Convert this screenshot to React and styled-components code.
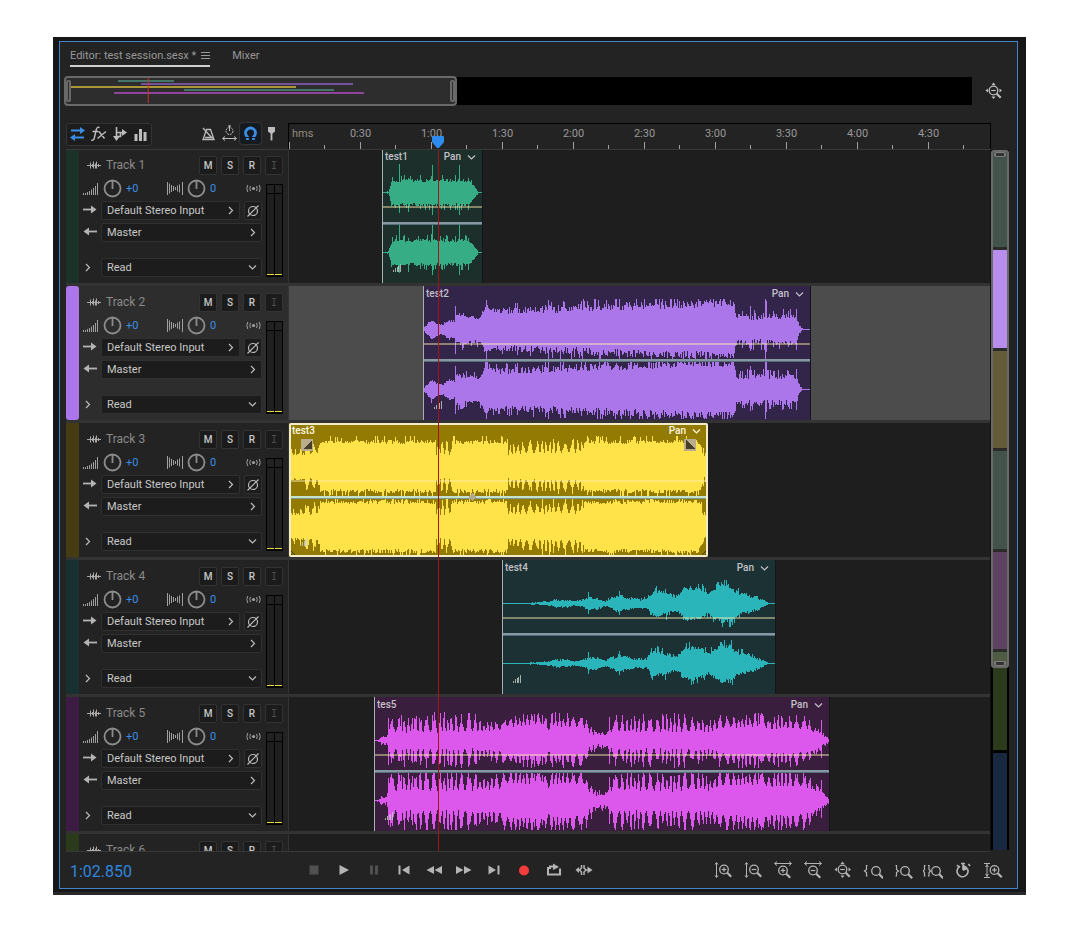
import React, { useMemo } from "react";
import styled, { createGlobalStyle, css } from "styled-components";

const GlobalStyle = createGlobalStyle`
  * {
    box-sizing: border-box;
  }
  body {
    margin: 0;
    background: #fff;
    color: #bdbdbd;
    font-family: Roboto, "Liberation Sans", sans-serif;
    font-size: 11px;
    line-height: 16px;
  }
  button, select, input {
    margin: 0;
    padding: 0;
    border: 0;
    background: none;
    color: inherit;
    font: inherit;
  }
  svg {
    display: block;
    flex: none;
  }
`;

const Page = styled.div`
  height: 100vh;
  padding: 37px 53px;
  display: flex;
`;

const Frame = styled.div`
  flex: 1;
  min-width: 0;
  display: flex;
  padding: 4px 8px 3px 6px;
  background: #161719;
  border-bottom: 3px solid #292929;
`;

const Panel = styled.main`
  flex: 1;
  min-width: 0;
  display: flex;
  flex-direction: column;
  background: #232323;
  border: 1px solid #4682c8;
`;

/* Tabs */

const Tabs = styled.nav`
  height: 34px;
  padding: 4px 10px 0;
  display: flex;
  align-items: flex-start;
  gap: 22px;
`;

const Tab = styled.button`
  height: 21px;
  display: flex;
  align-items: center;
  gap: 5px;
  font-size: 11px;
  color: #989898;
  white-space: nowrap;
  border-bottom: 2px solid ${props => (props.$active ? "#d0d0d0" : "transparent")};
`;

/* Overview */

const OverviewRow = styled.div`
  height: 30px;
  padding: 0 13px 0 4px;
  margin-bottom: 17px;
  display: flex;
  align-items: center;
  gap: 11px;
`;

const Overview = styled.div`
  flex: 1;
  height: 28px;
  display: flex;
  align-items: center;
  background: linear-gradient(90deg, #232323 10px, #000 10px);
`;

const OverviewWindow = styled.div`
  width: 393px;
  height: 30px;
  flex: none;
  display: flex;
  align-items: center;
  justify-content: space-between;
  background: #2d2d2d;
  border: 2px solid #696969;
  border-radius: 4px;
`;

const Handle = styled.span`
  width: 5px;
  height: 22px;
  flex: none;
  background: #2d2d2d;
  border: 2px solid #696969;
  border-radius: 2px;
`;

const OverviewChart = styled.svg`
  flex: 1;
  min-width: 0;
  height: 26px;
`;

/* Workspace */

const Workspace = styled.div`
  flex: 1;
  min-height: 0;
  display: flex;
  padding: 0 8px 0 6px;
`;

const Session = styled.div`
  flex: 1;
  min-width: 0;
  display: flex;
  flex-direction: column;
`;

const SessionHead = styled.div`
  position: relative;
  z-index: 2;
  height: 27px;
  flex: none;
  margin-bottom: -1px;
  display: flex;
  border-bottom: 1px solid #383838;
`;

const Tools = styled.div`
  width: 222px;
  flex: none;
  padding: 0 6px 0 0;
  display: flex;
  align-items: flex-start;
`;

const ToolGroup = styled.div`
  display: flex;
  margin-right: auto;
  border: 1px solid #343434;
  border-radius: 3px;
  background: #1d1d1d;
`;

const Tool = styled.button`
  width: 21px;
  height: 21px;
  display: flex;
  align-items: center;
  justify-content: center;
  border-radius: 3px;
  color: ${props => (props.$active ? "#3b8de6" : "#bdbdbd")};
  ${props =>
    props.$boxed &&
    css`
      background: #151a20;
      box-shadow: 0 0 0 1px #343434;
    `}
`;

const Ruler = styled.div`
  position: relative;
  flex: 1;
  min-width: 0;
  overflow: hidden;
  border: 1px solid #000;
  border-bottom: 0;
`;

const RulerLabels = styled.div`
  display: flex;
  padding-top: 2px;
  color: #999;
`;

const RulerUnit = styled.span`
  width: 36px;
  flex: none;
  padding-left: 3px;
  color: #938c7c;
`;

const RulerLabel = styled.span`
  width: 71px;
  flex: none;
  text-align: center;
`;

const PlayheadMarker = styled.svg`
  position: absolute;
  left: 143px;
  top: 12px;
`;

const Viewport = styled.div`
  position: relative;
  flex: 1;
  min-height: 0;
  overflow: hidden;
  border-bottom: 1px solid #383838;
  border-right: 1px solid #111;
`;

const PlayheadLine = styled.span`
  position: absolute;
  z-index: 1;
  left: 372px;
  top: 0;
  bottom: 0;
  width: 1px;
  background: #a51414;
`;

/* Tracks */

const TrackRow = styled.section`
  height: 137px;
  display: flex;
  border-bottom: 3px solid #333;
`;

const TrackHeader = styled.div`
  width: 223px;
  flex: none;
  display: flex;
  background: ${props => (props.$selected ? "#2d2d2d" : "#232323")};
  border-right: 1px solid #343434;
`;

const ColorStrip = styled.span`
  width: 13px;
  flex: none;
  background: ${props => props.$color};
  border-radius: ${props => (props.$selected ? "3px" : "0")};
`;

const HeaderBody = styled.div`
  flex: 1;
  min-width: 0;
  padding: 7px 5px 0 4px;
`;

const TitleLine = styled.div`
  height: 19px;
  margin-bottom: 4px;
  display: flex;
  align-items: center;
  gap: 4px;
`;

const TitleIcon = styled.span`
  width: 19px;
  flex: none;
  padding: 0 0 1px 3px;
`;

const TrackName = styled.h2`
  margin: 0 auto 0 0;
  padding-bottom: 1px;
  font-size: 12px;
  font-weight: 400;
  color: #8a8a8a;
  white-space: nowrap;
`;

const ToggleButton = styled.button`
  width: 18px;
  height: 19px;
  flex: none;
  background: #1b1b1b;
  border: 1px solid #333;
  border-radius: 2px;
  color: ${props => (props.disabled ? "#4c4c4c" : "#c8c8c8")};
  font-family: ${props => (props.disabled ? '"DejaVu Sans Mono", monospace' : "Roboto, sans-serif")};
  font-size: 10px;
  font-weight: ${props => (props.disabled ? 400 : 500)};
  line-height: 17px;
`;

const Controls = styled.div`
  display: grid;
  grid-template-columns: 1fr 17px;
  column-gap: 4px;
`;

const ControlRows = styled.div`
  display: flex;
  flex-direction: column;
  gap: 3px;
`;

const KnobLine = styled.div`
  height: 19px;
  display: grid;
  grid-template-columns: 20px 23px 41px 20px 23px 1fr 17px;
  align-items: center;
`;

const ValueInput = styled.input`
  width: 24px;
  color: #3b8de6;
`;

const ControlLine = styled.div`
  height: 19px;
  margin-top: ${props => (props.$spaced ? "13px" : "0")};
  display: flex;
`;

const LineIcon = styled.span`
  width: 18px;
  flex: none;
  padding-top: 1px;
`;

const ExpandButton = styled.button`
  width: 18px;
  flex: none;
  display: flex;
  align-items: center;
`;

const SelectBox = styled.label`
  flex: 1;
  min-width: 0;
  display: flex;
  align-items: center;
  padding-right: 4px;
  background: #1c1c1c;
  border: 1px solid #303030;
  border-radius: 2px;
`;

const Select = styled.select`
  flex: 1;
  min-width: 0;
  height: 17px;
  padding-left: 5px;
  appearance: none;
  outline: 0;
  color: #c8c8c8;
`;

const PhaseButton = styled.button`
  width: 18px;
  margin-left: 4px;
  display: flex;
  align-items: center;
  justify-content: center;
  background: #1c1c1c;
  border: 1px solid #303030;
  border-radius: 2px;
`;

const Meter = styled.div`
  height: 93px;
  margin-top: 5px;
  display: grid;
  grid-template-columns: 1fr 1fr;
  background: #000;
  border: 1px solid #000;
  column-gap: 1px;
`;

const MeterBar = styled.span`
  background: linear-gradient(#222 8px, #000 8px, #000 9px, #1f1f1f 9px);
  border-bottom: 1px solid #e8dc3c;
  margin-bottom: 1px;
`;

const Lane = styled.div`
  flex: 1;
  min-width: 0;
  overflow: hidden;
  background: ${props => (props.$selected ? "#4c4c4c" : "#1e1e1e")};
`;

const ClipBox = styled.article`
  position: relative;
  width: ${props => props.$width}px;
  height: 134px;
  margin-left: ${props => props.$start}px;
  background: ${props => props.$bg};
  overflow: hidden;
  border-radius: ${props => (props.$selected ? "2px" : "0")};
`;

const ClipHead = styled.div`
  position: absolute;
  top: 0;
  left: 3px;
  right: 7px;
  height: 16px;
  display: flex;
  align-items: center;
  font-size: 10px;
  font-weight: 500;
  color: ${props => (props.$selected ? "#fffbe8" : "#c4c0c8")};
`;

const ClipName = styled.span`
  margin-right: auto;
`;

const PanButton = styled.button`
  display: flex;
  align-items: center;
  gap: 6px;
  font-weight: 500;
`;

/* Vertical navigator */

const Navigator = styled.div`
  position: relative;
  width: 18px;
  flex: none;
  margin: 27px 0 2px;
  padding: 0 2px;
  display: flex;
  flex-direction: column;
  gap: 3px;
  background: #000;
`;

const NavSegment = styled.span`
  flex: 1;
  background: ${props => props.$color};
`;

const NavThumb = styled.div`
  position: absolute;
  left: 0;
  right: 0;
  top: 0;
  height: 74%;
  display: flex;
  flex-direction: column;
  align-items: center;
  justify-content: space-between;
  background: rgba(255, 255, 255, 0.17);
  border: 2px solid #6a6a6a;
  border-radius: 3px;
`;

const NavGrip = styled.span`
  width: 12px;
  height: 5px;
  background: #333;
  border: solid #7a7a7a;
  border-width: 1px 2px;
  border-radius: 2px;
`;

/* Transport */

const Transport = styled.footer`
  height: 36px;
  flex: none;
  padding: 0 9px 0 10px;
  display: flex;
  align-items: center;
`;

const Time = styled.output`
  width: 229px;
  padding-top: 4px;
  font-size: 16px;
  line-height: 20px;
  color: #2f86de;
`;

const TransportGroup = styled.div`
  display: flex;
  margin-left: ${props => (props.$end ? "auto" : "0")};
`;

const TransportButton = styled.button`
  width: 30px;
  height: 24px;
  display: flex;
  align-items: center;
  justify-content: center;
  color: ${props => (props.disabled ? "#505050" : "#b4b4b4")};
`;

// Envelope points are [x, quiet, loud] in pixels, spikes are [x, up, down].
const tracks = [
  {
    name: "Track 1",
    strip: "#1c3128",
    clip: {
      name: "test1",
      start: 93,
      width: 101,
      bg: "#1d2f2a",
      wave: "#37ad85",
      env: [[0, 0, 0], [6, 0, 1], [8, 5, 8], [10, 10, 14], [14, 10, 13], [50, 10, 14], [84, 10, 14], [88, 9, 11], [92, 5, 6], [95, 1, 2], [96, 0, 0], [101, 0, 0]],
      spikes: [[10, 15, 12], [17, 28, 20], [26, 14, 19], [50, 27, 22], [59, 12, 16], [77, 27, 22], [86, 14, 17]],
    },
  },
  {
    name: "Track 2",
    strip: "#ab76ea",
    selected: true,
    clip: {
      name: "test2",
      start: 134,
      width: 388,
      bg: "#33244a",
      wave: "#ab76ea",
      env: [[0, 0, 1], [5, 5, 7], [9, 8, 10], [15, 4, 5], [20, 4, 6], [26, 7, 10], [31, 7, 9], [33, 12, 17], [42, 11, 15], [56, 10, 13], [60, 16, 20], [63, 23, 27], [66, 18, 22], [75, 15, 22], [120, 16, 25], [180, 18, 27], [230, 20, 29], [311, 22, 30], [313, 10, 16], [330, 9, 17], [373, 10, 16], [375, 4, 7], [379, 0, 1], [382, 0, 0], [388, 0, 0]],
      spikes: [[32, 23, 24], [40, 16, 18], [63, 29, 30], [94, 26, 25], [125, 29, 30], [140, 28, 24], [158, 28, 26], [319, 18, 18], [327, 23, 21], [342, 30, 30], [343, 28, 22], [350, 18, 17], [365, 18, 17], [373, 20, 20]],
    },
  },
  {
    name: "Track 3",
    strip: "#453c12",
    clip: {
      name: "test3",
      start: 0,
      width: 419,
      bg: "#937a02",
      wave: "#ffe349",
      active: true,
      rhythm: true,
      env: [[0, 11, 14], [15, 11, 14], [16, 10, 24], [29, 12, 24], [31, 22, 26], [90, 22, 27], [146, 22, 27], [147, 11, 28], [162, 11, 28], [163, 22, 27], [217, 22, 27], [219, 11, 21], [240, 12, 25], [262, 12, 28], [280, 12, 27], [293, 13, 27], [295, 22, 26], [350, 22, 27], [408, 23, 27], [411, 18, 24], [414, 10, 16], [419, 8, 10]],
      spikes: [],
    },
  },
  {
    name: "Track 4",
    strip: "#193031",
    clip: {
      name: "test4",
      start: 213,
      width: 274,
      bg: "#1b3133",
      wave: "#29b5ba",
      env: [[0, 0, 0], [22, 0, 0], [30, 0, 1], [48, 1, 2], [52, 2, 4], [64, 2, 4], [72, 1, 2], [80, 2, 4], [87, 4, 7], [95, 3, 6], [103, 1, 3], [108, 3, 6], [117, 6, 9], [125, 4, 7], [135, 2, 5], [144, 3, 6], [149, 8, 12], [155, 9, 14], [165, 7, 12], [173, 5, 8], [178, 8, 11], [181, 12, 17], [190, 13, 18], [200, 11, 16], [206, 8, 10], [212, 12, 16], [219, 15, 20], [228, 14, 20], [236, 8, 12], [250, 5, 9], [257, 3, 6], [262, 1, 3], [266, 0, 0], [274, 0, 0]],
      spikes: [[86, 11, 10], [117, 12, 11], [153, 15, 12], [219, 21, 19], [222, 23, 18], [230, 14, 21]],
    },
  },
  {
    name: "Track 5",
    strip: "#3d1c43",
    clip: {
      name: "tes5",
      start: 85,
      width: 456,
      bg: "#3a1e3e",
      wave: "#dc58ec",
      rhythm: true,
      lowerGain: 1.2,
      env: [[0, 0, 0], [5, 0, 1], [7, 1, 4], [12, 1, 4], [14, 7, 24], [60, 7, 27], [104, 7, 26], [106, 8, 18], [128, 9, 22], [132, 13, 26], [168, 14, 27], [173, 8, 20], [178, 13, 27], [210, 12, 26], [216, 5, 15], [224, 3, 9], [232, 3, 7], [234, 5, 9], [235, 7, 25], [300, 7, 26], [325, 8, 25], [334, 7, 18], [345, 11, 25], [390, 13, 27], [395, 9, 22], [400, 11, 26], [433, 10, 24], [438, 7, 15], [446, 5, 11], [451, 2, 5], [456, 0, 1]],
      spikes: [[14, 22, 24], [27, 25, 20], [40, 22, 21], [58, 25, 23], [66, 27, 22], [76, 21, 24], [101, 26, 23], [160, 26, 26], [168, 25, 24], [178, 27, 26], [235, 23, 23], [288, 26, 22], [384, 27, 27], [447, 20, 17]],
    },
  },
  { name: "Track 6", strip: "#2c3a1c" },
];

const times = ["0:30", "1:00", "1:30", "2:00", "2:30", "3:00", "3:30", "4:00", "4:30"];

const navColors = ["#1c3128", "#ab76ea", "#453c12", "#1c3128", "#3d1c43", "#2c3a1c", "#182840"];

const randomFrom = seed => {
  let s = seed;
  return () => {
    s = (s * 16807) % 2147483647;
    return s / 2147483647;
  };
};

const levelAt = (env, x) => {
  let i = 1;
  while (i < env.length - 1 && env[i][0] < x) i++;
  const [x0, a0, b0] = env[i - 1];
  const [x1, a1, b1] = env[i];
  const t = Math.min(1, Math.max(0, (x - x0) / (x1 - x0)));
  return [a0 + (a1 - a0) * t, b0 + (b1 - b0) * t];
};

const wavePath = (clip, centre, seed, gain = 1) => {
  const next = randomFrom(seed);
  let d = "";
  for (let x = 0; x < clip.width; x++) {
    const [low, high] = levelAt(clip.env, x);
    const range = high - low;
    const beaten = clip.rhythm && range > 8;
    const beat = Math.pow(Math.sin(x * 0.62 + 1.4 * Math.sin(x * 0.17)), 2);
    const level = () => {
      const r = next();
      if (beaten) return low + range * Math.min(1.05, beat * (0.5 + 0.6 * r) + 0.1 * next());
      // rare peaks stand a few pixels above the loud level
      return low + range * r + (low > 7 && r > 0.88 ? 2 + next() * 2 : 0);
    };
    let up = level() * gain;
    let down = level() * gain;
    const spike = clip.spikes.find(item => item[0] === x);
    if (spike) {
      up = spike[1];
      down = spike[2];
    }
    up = Math.min(30, Math.round(up));
    down = Math.min(29, Math.round(down));
    d += `M${x + 0.5} ${centre - up}V${centre + down + 1}`;
  }
  return d;
};

const Icon = ({ size = 20, children, ...rest }) => (
  <svg width={size} height={size} viewBox={`0 0 ${size} ${size}`} fill="none" stroke="currentColor" aria-hidden="true" {...rest}>
    {children}
  </svg>
);

const Chevron = ({ down }) => (
  <svg width="9" height="9" viewBox="0 0 9 9" fill="none" stroke="currentColor" strokeWidth="1.2" aria-hidden="true">
    <path d={down ? "M1 2.5 4.5 6 8 2.5" : "M3 1 6.5 4.5 3 8"} />
  </svg>
);

const Lens = ({ x, y, sign }) => (
  <g transform={`translate(${x} ${y})`}>
    <circle r="4.3" strokeWidth="1.3" />
    <path d="m3.2 3.2 4 4" strokeWidth="2.2" />
    {sign && <path d="M-2.3 0h4.6" strokeWidth="1.2" />}
    {sign === "+" && <path d="M0-2.3v4.6" strokeWidth="1.2" />}
  </g>
);

const ZoomAllIcon = () => (
  <Icon>
    <Lens x={9.5} y={9.5} sign="-" />
    <path
      d="m9.5 1.500 2 2.500h-4zM9.500 18l2-2.500h-4zM1.500 9.500l2.500-2v4zM18 9.500l-2.500-2v4z"
      fill="currentColor"
      stroke="none"
    />
  </Icon>
);

const Knob = () => (
  <Icon size={19} stroke="#8c8c8c">
    <circle cx="9.5" cy="9.5" r="8" strokeWidth="1.8" />
    <path d="M9.5 2v8" strokeWidth="1.8" />
  </Icon>
);

const VolumeIcon = () => (
  <Icon size={16} stroke="#a0a0a0">
    <path d="M.5 14v-2M2.5 14v-2M4.5 14v-3M6.5 14v-4M8.5 14V8.5M10.5 14V7M12.5 14V5M14.5 14V2" />
  </Icon>
);

const StereoIcon = () => (
  <Icon size={17} stroke="#a0a0a0">
    <path d="M.5 2v13M2.5 3.5v10M4.5 5v7M6.5 6v5M8.5 7v3M10.5 5.5v6M12.5 4.5v8M15.5 2v13" />
  </Icon>
);

const MonitorIcon = () => (
  <Icon size={17} stroke="#a0a0a0">
    <circle cx="8.5" cy="8.5" r="1.6" fill="#a0a0a0" stroke="none" />
    <path d="M5.5 6q-1.500 2.500 0 5M11.5 6q1.500 2.500 0 5M2.800 5q-2 3.500 0 7M14.200 5q2 3.500 0 7" />
  </Icon>
);

const WaveIcon = () => (
  <Icon size={16} stroke="#aaa">
    <path d="M1 8.5h14M4.5 5.5v6M6.5 7v3M7.5 4.5v7M9.5 6.5v5M10.500 4.5v7M12.5 7v3" />
  </Icon>
);

const ArrowIcon = ({ back }) => (
  <Icon size={14} stroke="#b4b4b4" transform={back ? "scale(-1 1)" : undefined}>
    <path d="M0 7.500h10" strokeWidth="1.800" />
    <path d="m8 3.500 5.500 4L8 11.500z" fill="#b4b4b4" stroke="none" />
  </Icon>
);

const PhaseIcon = () => (
  <Icon size={14}>
    <circle cx="7" cy="7" r="4.5" strokeWidth="1.2" />
    <path d="M1.500 12.500 12.500 1.500" strokeWidth="1.2" />
  </Icon>
);

const transportIcons = [
  { label: "Stop", disabled: true, art: <path d="M5.500 5.500h9v9h-9z" fill="currentColor" stroke="none" /> },
  { label: "Play", art: <path d="M5.500 5 15 10l-9.500 5z" fill="currentColor" stroke="none" /> },
  { label: "Pause", disabled: true, art: <path d="M6 5.500h3v9H6zM11 5.500h3v9h-3z" fill="currentColor" stroke="none" /> },
  { label: "Move to previous", art: <path d="M4.500 5.500h2v9h-2zM15.500 5.500v9L8 10z" fill="currentColor" stroke="none" /> },
  { label: "Rewind", art: <path d="M10 6v8l-7.500-4zM18 6v8l-7.500-4z" fill="currentColor" stroke="none" /> },
  { label: "Fast forward", art: <path d="M2 6v8l7.500-4zM10 6v8l7.500-4z" fill="currentColor" stroke="none" /> },
  { label: "Move to next", art: <path d="M4.500 5.500v9L12 10zM13.500 5.500h2v9h-2z" fill="currentColor" stroke="none" /> },
  { label: "Record", art: <circle cx="10" cy="10.500" r="5" fill="#f23b3b" stroke="none" /> },
  {
    label: "Loop playback",
    art: (
      <>
        <path d="M5.500 8H4v6.500h12V8.500" strokeWidth="2" />
        <path d="M6 9V6.500h4" strokeWidth="2" />
        <path d="m9 3.500 6 3.500-6 3z" fill="currentColor" stroke="none" />
      </>
    ),
  },
  {
    label: "Skip selection",
    art: (
      <>
        <path d="M3 10h3M11.500 10h3M7.500 5v3L5.500 10l2 2v3M10 5v3l2 2-2 2v3" strokeWidth="1.500" />
        <path d="M5 7 1.500 10 5 13zM13.500 6.500l5 3.500-5 3.500z" fill="currentColor" stroke="none" />
      </>
    ),
  },
];

const zoomIcons = [
  {
    label: "Zoom in amplitude",
    art: (
      <>
        <path d="M3.500 3v14M2 4.500l1.500-2 1.500 2M2 15.500l1.500 2 1.500-2" />
        <Lens x={11} y={9.5} sign="+" />
      </>
    ),
  },
  {
    label: "Zoom out amplitude",
    art: (
      <>
        <path d="M3.500 3v14M2 4.500l1.500-2 1.500 2M2 15.500l1.500 2 1.500-2" />
        <Lens x={11} y={9.5} sign="-" />
      </>
    ),
  },
  {
    label: "Zoom in time",
    art: (
      <>
        <path d="M2 3.500h16M4 1.500l-2.500 2 2.500 2M16 1.500l2.500 2-2.500 2" />
        <Lens x={10} y={10.5} sign="+" />
      </>
    ),
  },
  {
    label: "Zoom out time",
    art: (
      <>
        <path d="M2 3.500h16M4 1.500l-2.500 2 2.500 2M16 1.500l2.500 2-2.500 2" />
        <Lens x={10} y={10.5} sign="-" />
      </>
    ),
  },
  { label: "Zoom out full", art: <ZoomAllIcon /> },
  {
    label: "Zoom in at in point",
    art: (
      <>
        <path d="M4.500 5.500H3.500V9.500L1.500 11l2 1.500v3.500h1" strokeWidth="1.2" />
        <Lens x={13} y={11} />
      </>
    ),
  },
  {
    label: "Zoom in at out point",
    art: (
      <>
        <path d="M2.500 5.500h1V9.500L5.500 11l-2 1.500v3.500h-1" strokeWidth="1.2" />
        <Lens x={12} y={11} />
      </>
    ),
  },
  {
    label: "Zoom to selection",
    art: (
      <>
        <path d="M2.500 5.500h-1V9.500L0 11l1.500 1.500v3.500h1M5 5.500h1V9.500L7.500 11 6 12.500v3.500H5" strokeWidth="1.2" />
        <Lens x={13} y={11} />
      </>
    ),
  },
  {
    label: "Zoom to time",
    art: (
      <>
        <path d="M7 6.300a5.500 5.500 0 1 0 7.500 2.500" strokeWidth="1.600" />
        <path d="M10 3.500V10M8 3.500h4M4 5l2 2M15.500 4l1.500 2" strokeWidth="1.600" />
        <path d="M10 11V5a6 6 0 0 1 5 4z" fill="currentColor" stroke="none" />
      </>
    ),
  },
  {
    label: "Zoom full height",
    art: (
      <>
        <path d="M1 3.500h6M1 17.500h6M4 4v13M2.500 7 4 5l1.500 2M2.500 14 4 16l1.500-2" />
        <Lens x={11.5} y={10} sign="+" />
      </>
    ),
  },
];

const Clip = ({ clip, seed }) => {
  const paths = useMemo(
    () => [wavePath(clip, 43, seed * 7919), wavePath(clip, 103, seed * 104729, clip.lowerGain)],
    [clip, seed]
  );
  const w = clip.width;

  return (
    <ClipBox $start={clip.start} $width={w} $bg={clip.bg} $selected={clip.active}>
      <svg width={w} height="134" viewBox={`0 0 ${w} 134`} shapeRendering="crispEdges" aria-hidden="true">
        {paths.map(d => (
          <path key={d} d={d} stroke={clip.wave} />
        ))}
        <path d={`M0 58h${w}`} stroke="#fff0b0" strokeWidth="2" opacity="0.45" />
        <path d={`M0 74h${w}`} stroke={clip.active ? "#c4e2cc" : "#8797a3"} strokeWidth="2" />
        <path d={`M0 75.500h${w}`} stroke={clip.active ? "#7f9a90" : "#566d7a"} />
        <path d="M11.500 123v-2M13.500 123v-4M15.500 123v-5M16.500 123v-6M18.500 123v-8" stroke="#c8d0c8" opacity="0.8" />
        {clip.active ? (
          <>
            <path d={`M12 16h12v12H12zM${w - 24} 16h12v12h-12z`} fill="#b8ac8c" />
            <path d={`M14 26 23 17v9zM${w - 22} 17v9h9z`} fill="#463e28" />
            <path d="m183 70 4 4-4 4-4-4z" fill="#b0aa90" />
            <path d={`M0 126l8 8M0 129l5 5M${w} 126l-8 8M${w} 129l-5 5`} stroke="#3c3200" />
            <rect x="1" y="1" width={w - 2} height="132" fill="none" stroke="#f2edc6" strokeWidth="2" />
          </>
        ) : (
          <>
            <path d="M.5 0v134" stroke="#a9aeb0" />
            <path d={`M${w - 0.5} 0v134`} stroke="#14141a" />
          </>
        )}
      </svg>
      <ClipHead $selected={clip.active}>
        <ClipName>{clip.name}</ClipName>
        <PanButton>
          Pan
          <Chevron down />
        </PanButton>
      </ClipHead>
    </ClipBox>
  );
};

const Track = ({ track, index }) => (
  <TrackRow>
    <TrackHeader $selected={track.selected}>
      <ColorStrip $color={track.strip} $selected={track.selected} />
      <HeaderBody>
        <TitleLine>
          <TitleIcon>
            <WaveIcon />
          </TitleIcon>
          <TrackName>{track.name}</TrackName>
          <ToggleButton aria-label="Mute">M</ToggleButton>
          <ToggleButton aria-label="Solo">S</ToggleButton>
          <ToggleButton aria-label="Record arm">R</ToggleButton>
          <ToggleButton aria-label="Monitor input" disabled>
            I
          </ToggleButton>
        </TitleLine>
        <Controls>
          <ControlRows>
            <KnobLine>
              <VolumeIcon />
              <Knob />
              <ValueInput aria-label={`${track.name} volume`} defaultValue="+0" />
              <StereoIcon />
              <Knob />
              <ValueInput aria-label={`${track.name} pan`} defaultValue="0" />
              <MonitorIcon />
            </KnobLine>
            <ControlLine>
              <LineIcon>
                <ArrowIcon />
              </LineIcon>
              <SelectBox>
                <Select aria-label={`${track.name} input`}>
                  <option>Default Stereo Input</option>
                </Select>
                <Chevron />
              </SelectBox>
              <PhaseButton aria-label="Invert phase">
                <PhaseIcon />
              </PhaseButton>
            </ControlLine>
            <ControlLine>
              <LineIcon>
                <ArrowIcon back />
              </LineIcon>
              <SelectBox>
                <Select aria-label={`${track.name} output`}>
                  <option>Master</option>
                </Select>
                <Chevron />
              </SelectBox>
            </ControlLine>
            <ControlLine $spaced>
              <ExpandButton aria-label="Show automation lanes">
                <Chevron />
              </ExpandButton>
              <SelectBox>
                <Select aria-label={`${track.name} automation mode`}>
                  <option>Read</option>
                </Select>
                <Chevron down />
              </SelectBox>
            </ControlLine>
          </ControlRows>
          <Meter>
            <MeterBar />
            <MeterBar />
          </Meter>
        </Controls>
      </HeaderBody>
    </TrackHeader>
    <Lane $selected={track.selected}>{track.clip && <Clip clip={track.clip} seed={index + 3} />}</Lane>
  </TrackRow>
);

const App = () => (
  <Page>
    <GlobalStyle />
    <Frame>
      <Panel>
        <Tabs>
          <Tab $active>
            Editor: test session.sesx *
            <svg width="9" height="9" viewBox="0 0 9 9" stroke="currentColor" aria-hidden="true">
              <path d="M0 1.500h9M0 4.500h9M0 7.500h9" />
            </svg>
          </Tab>
          <Tab>Mixer</Tab>
        </Tabs>

        <OverviewRow>
          <Overview>
            <OverviewWindow>
              <Handle />
              <OverviewChart viewBox="0 0 380 26" preserveAspectRatio="none" shapeRendering="crispEdges" aria-hidden="true">
                <g strokeWidth="2">
                  <path d="M47 3h56" stroke="#457468" />
                  <path d="M70 6h213" stroke="#76529a" />
                  <path d="M0 9h226" stroke="#ad963a" />
                  <path d="M113 12h151" stroke="#457468" />
                  <path d="M43 15h251" stroke="#8e459a" />
                </g>
                <path d="M77.500 0v25" stroke="#d03030" />
              </OverviewChart>
              <Handle />
            </OverviewWindow>
          </Overview>
          <Tool aria-label="Zoom out full">
            <ZoomAllIcon />
          </Tool>
        </OverviewRow>

        <Workspace>
          <Session>
            <SessionHead>
              <Tools>
                <ToolGroup>
                  <Tool $active aria-label="Inputs and outputs">
                    <Icon size={17}>
                      <path d="M2 4.500h10M5 11.500h10" strokeWidth="1.800" />
                      <path d="m11 1 5 3.500-5 3.500zM6 8 1 11.500 6 15z" fill="currentColor" stroke="none" />
                    </Icon>
                  </Tool>
                  <Tool aria-label="Effects">
                    <Icon size={17}>
                      <path d="M9.500 1.500q-2.500-1-3.200 2L4.300 12q-.6 3-3 2M2.500 5.500h6M9 5.500l5.500 7M16 5.500l-8.500 7" strokeWidth="1.400" />
                    </Icon>
                  </Tool>
                  <Tool aria-label="Sends">
                    <Icon size={17}>
                      <path d="M5.500 1v11M5.500 6.500h6M9.500 6.500v4H5.500" strokeWidth="1.600" />
                      <path d="m2 10 3.500 5L9 10zM11 3l5 3.500-5 3.500z" fill="currentColor" stroke="none" />
                    </Icon>
                  </Tool>
                  <Tool aria-label="EQ">
                    <Icon size={17}>
                      <path d="M4 8v7M8.500 3v12M13 6v9" strokeWidth="3" />
                    </Icon>
                  </Tool>
                </ToolGroup>
                <Tool aria-label="Metronome">
                  <Icon size={17}>
                    <path d="M6.500 4.500h4l3.500 10H3zM3 3l9 10M5 12.500h8" strokeWidth="1.300" />
                  </Icon>
                </Tool>
                <Tool aria-label="Stretch clips">
                  <Icon size={17}>
                    <circle cx="8.500" cy="6" r="3.500" strokeDasharray="2 1" />
                    <path d="M8.500 6V.5M7 1h3M2 13.500h13M4 11.500l-2.500 2 2.500 2M13 11.500l2.500 2-2.500 2" />
                  </Icon>
                </Tool>
                <Tool $active $boxed aria-label="Snapping">
                  <Icon size={17}>
                    <path d="M5.500 15V12Q3.500 10 3.500 8a5 5 0 0 1 10 0Q13.500 10 11.500 12V15" strokeWidth="2.800" />
                    <path d="M3.500 12.500h4M9.500 12.500h4" stroke="#151a20" />
                  </Icon>
                </Tool>
                <Tool aria-label="Add marker">
                  <Icon size={17}>
                    <path d="M5 2h7v4.500L9.500 8.500h-2L5 6.500z" fill="currentColor" stroke="none" />
                    <path d="M8.500 8v7.500" strokeWidth="1.800" />
                  </Icon>
                </Tool>
              </Tools>
              <Ruler>
                <RulerLabels>
                  <RulerUnit>hms</RulerUnit>
                  {times.map(time => (
                    <RulerLabel key={time}>{time}</RulerLabel>
                  ))}
                </RulerLabels>
                <svg width="700" height="8" viewBox="0 0 700 8" stroke="#a0a0a0" shapeRendering="crispEdges" aria-hidden="true">
                  {Array.from({ length: 20 }, (_, i) => (
                    <path key={i} d={`M${Math.floor(i * 35.5) + 0.5} ${i % 2 ? 3 : 0}V8`} />
                  ))}
                </svg>
                <PlayheadMarker width="12" height="13" viewBox="0 0 12 13" aria-hidden="true">
                  <path d="M0 1q0-1 1-1h10q1 0 1 1v5L7 12H5L0 6z" fill="#2d8ceb" />
                </PlayheadMarker>
              </Ruler>
            </SessionHead>
            <Viewport>
              {tracks.map((track, index) => (
                <Track key={track.name} track={track} index={index} />
              ))}
              <PlayheadLine />
            </Viewport>
          </Session>
          <Navigator>
            {navColors.map((color, i) => (
              <NavSegment key={i} $color={color} />
            ))}
            <NavThumb>
              <NavGrip />
              <NavGrip />
            </NavThumb>
          </Navigator>
        </Workspace>

        <Transport>
          <Time>1:02.850</Time>
          <TransportGroup>
            {transportIcons.map(({ label, disabled, art }) => (
              <TransportButton key={label} aria-label={label} disabled={disabled}>
                <Icon>{art}</Icon>
              </TransportButton>
            ))}
          </TransportGroup>
          <TransportGroup $end>
            {zoomIcons.map(({ label, art }) => (
              <TransportButton key={label} aria-label={label}>
                <Icon>{art}</Icon>
              </TransportButton>
            ))}
          </TransportGroup>
        </Transport>
      </Panel>
    </Frame>
  </Page>
);

export default App;
